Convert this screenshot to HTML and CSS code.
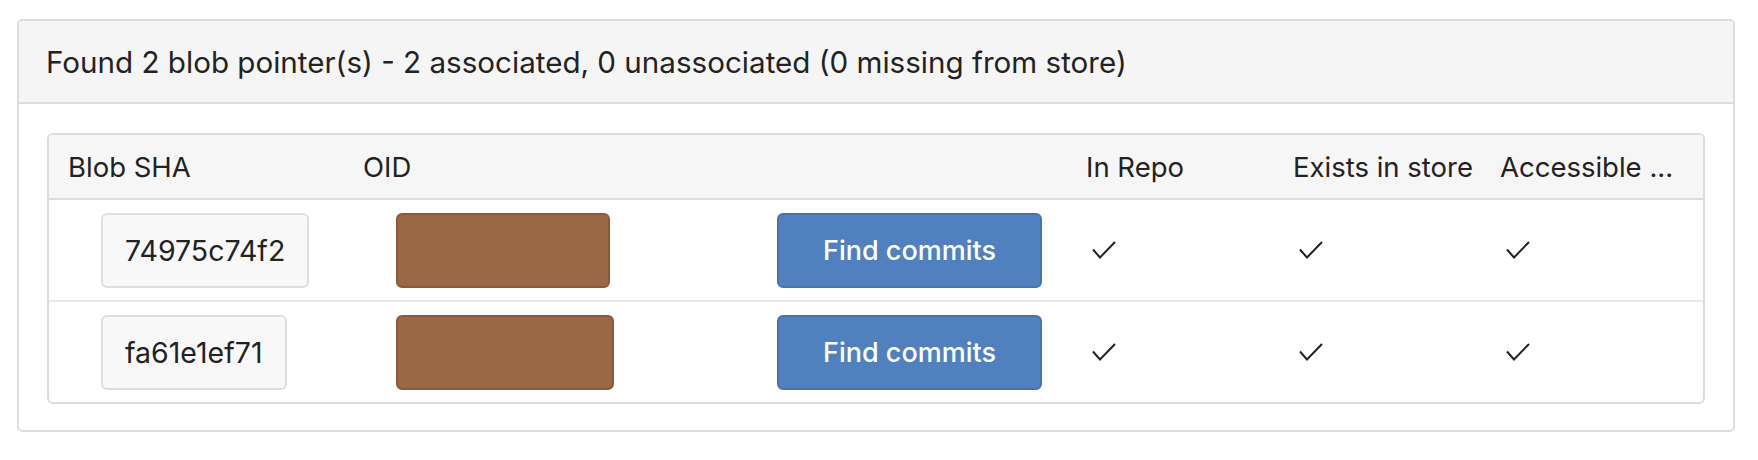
FILE: index.html
```html
<!DOCTYPE html>
<html lang="en">
<head>
    <meta charset="UTF-8">
    <meta name="viewport" content="width=device-width, initial-scale=1.0">
    <title>LFS blob pointers</title>
    <link rel="stylesheet" href="styles.css">
</head>
<body>
    <div class="panel">
        <div class="panel-header">
            <h3>Found 2 blob pointer(s) - 2 associated, 0 unassociated (0 missing from store)</h3>
        </div>
        <div class="panel-body">
            <table class="pointers">
                <colgroup>
                    <col class="col-sha">
                    <col class="col-oid">
                    <col class="col-action">
                    <col class="col-flag">
                    <col class="col-flag">
                    <col class="col-last">
                </colgroup>
                <thead>
                    <tr>
                        <th>Blob SHA</th>
                        <th>OID</th>
                        <th></th>
                        <th>In Repo</th>
                        <th>Exists in store</th>
                        <th>Accessible ...</th>
                    </tr>
                </thead>
                <tbody>
                    <tr>
                        <td><span class="sha">74975c74f2</span></td>
                        <td><span class="oid oid-short"></span></td>
                        <td><button class="btn-find">Find commits</button></td>
                        <td><svg class="check" viewBox="0 0 24 18"><polyline points="1,8.5 8,16.5 23,1"/></svg></td>
                        <td><svg class="check" viewBox="0 0 24 18"><polyline points="1,8.5 8,16.5 23,1"/></svg></td>
                        <td><svg class="check" viewBox="0 0 24 18"><polyline points="1,8.5 8,16.5 23,1"/></svg></td>
                    </tr>
                    <tr>
                        <td><span class="sha">fa61e1ef71</span></td>
                        <td><span class="oid oid-long"></span></td>
                        <td><button class="btn-find">Find commits</button></td>
                        <td><svg class="check" viewBox="0 0 24 18"><polyline points="1,8.5 8,16.5 23,1"/></svg></td>
                        <td><svg class="check" viewBox="0 0 24 18"><polyline points="1,8.5 8,16.5 23,1"/></svg></td>
                        <td><svg class="check" viewBox="0 0 24 18"><polyline points="1,8.5 8,16.5 23,1"/></svg></td>
                    </tr>
                </tbody>
            </table>
        </div>
    </div>
</body>
</html>
```

FILE: styles.css
```css
* {
    margin: 0;
    padding: 0;
    box-sizing: border-box;
}

body {
    font-family: Inter, "Noto Sans", sans-serif;
    color: #222;
    background-color: #fff;
    padding: 19px 23px 0 17px;
}

/* Outer panel */
.panel {
    border: 2px solid #dcdcdc;
    border-radius: 5px;
    overflow: hidden;
}

.panel-header {
    height: 83px;
    background-color: #f5f5f5;
    border-bottom: 2px solid #dcdcdc;
    display: flex;
    align-items: center;
    padding-left: 27px;
}

.panel-header h3 {
    font-size: 29.6px;
    font-weight: 400;
    white-space: nowrap;
}

.panel-body {
    padding: 29px 28px 26px 28px;
}

/* Pointer table */
.pointers {
    width: 100%;
    table-layout: fixed;
    border-collapse: separate;
    border-spacing: 0;
    border: 2px solid #dcdcdc;
    border-radius: 6px;
    overflow: hidden;
}

.col-sha { width: 295px; }
.col-oid { width: 381px; }
.col-action { width: 342px; }
.col-flag { width: 207px; }

.pointers th {
    height: 65px;
    background-color: #f6f6f6;
    border-bottom: 2px solid #dcdcdc;
    text-align: left;
    font-size: 27.5px;
    font-weight: 400;
    padding-left: 19px;
    white-space: nowrap;
    overflow: hidden;
}

.pointers td {
    height: 100px;
    vertical-align: middle;
    padding-left: 20px;
}

.pointers tbody tr + tr td {
    height: 102px;
    border-top: 2px solid #e8e8e8;
}

/* Cell contents */
.sha,
.oid,
.btn-find {
    margin-left: 32px;
    height: 75px;
    border-radius: 6px;
    vertical-align: middle;
}

.sha {
    display: inline-flex;
    align-items: center;
    padding: 0 22px;
    background-color: #f8f8f8;
    border: 2px solid #dedede;
    font-size: 28.5px;
}

.oid {
    display: inline-block;
    background-color: #9a6844;
    border: 2px solid #8a5b3b;
}

.oid-short { width: 214px; }
.oid-long { width: 218px; }

.btn-find {
    width: 265px;
    background-color: #5081be;
    border: 2px solid #4873ad;
    color: #fff;
    font-family: inherit;
    font-size: 27px;
    font-weight: 500;
    cursor: pointer;
}

.check {
    display: block;
    width: 24px;
    height: 18px;
    margin-left: 5px;
    fill: none;
    stroke: #222;
    stroke-width: 2;
}
```
